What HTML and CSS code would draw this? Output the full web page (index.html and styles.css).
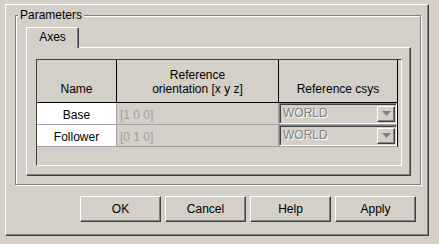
FILE: index.html
```html
<!DOCTYPE html>
<html lang="en">
<head>
  <meta charset="UTF-8" />
  <title>Parameters</title>
  <link rel="stylesheet" href="styles.css">
</head>
<body>

  <div class="window">
    <div class="group">
      <span class="group-title">Parameters</span>

      <div class="tabs">
        <div class="tab active">Axes</div>
      </div>

      <div class="tab-panel">
        <div class="table-view">
          <table class="grid">
            <colgroup>
              <col class="col-name">
              <col class="col-vec">
              <col class="col-csys">
            </colgroup>
            <thead>
              <tr class="head">
                <th>Name</th>
                <th>Reference<br>orientation [x y z]</th>
                <th class="last">Reference csys</th>
              </tr>
            </thead>
            <tbody>
              <tr>
                <td class="name">Base</td>
                <td class="vec">[1 0 0]</td>
                <td class="csys">
                  <div class="combo">
                    <span class="combo-text">WORLD</span>
                    <span class="combo-btn">
                      <svg width="9" height="5" viewBox="0 0 9 5"><path d="M0 0h9L4.5 5z" fill="#808080"/></svg>
                    </span>
                  </div>
                </td>
              </tr>
              <tr>
                <td class="name">Follower</td>
                <td class="vec">[0 1 0]</td>
                <td class="csys">
                  <div class="combo">
                    <span class="combo-text">WORLD</span>
                    <span class="combo-btn">
                      <svg width="9" height="5" viewBox="0 0 9 5"><path d="M0 0h9L4.5 5z" fill="#808080"/></svg>
                    </span>
                  </div>
                </td>
              </tr>
            </tbody>
          </table>
        </div>
      </div>
    </div>

    <div class="buttons">
      <button type="button">OK</button>
      <button type="button">Cancel</button>
      <button type="button">Help</button>
      <button type="button">Apply</button>
    </div>
  </div>

</body>
</html>
```

FILE: styles.css
```css
body {
  margin: 0;
  background: #d4d0c8;
  font-family: 'Liberation Sans', Arial, sans-serif;
  font-size: 12px;
  color: #000;
}

.window {
  box-sizing: border-box;
  width: 424px;
  height: 232px;
  margin: 4px 0 0 5px;
  padding: 10px 0 0 9px;
  border: 1px solid;
  border-color: #fff #404040 #404040 #fff;
  box-shadow: inset -1px -1px 0 #808080;
  display: flex;
  flex-direction: column;
}

/* etched group box */
.group {
  box-sizing: border-box;
  width: 406px;
  height: 170px;
  padding-left: 10px;
  border: 1px solid #808080;
  box-shadow: 1px 1px 0 #fff, inset 1px 1px 0 #fff;
  display: flex;
  flex-direction: column;
}

.group-title {
  align-self: flex-start;
  margin: -8px 0 0 -8px;
  padding: 0 2px;
  line-height: 14px;
  background: #d4d0c8;
}

.tabs {
  display: flex;
  margin-top: 5px;
}

.tab {
  position: relative;
  z-index: 1;
  box-sizing: border-box;
  width: 53px;
  height: 21px;
  margin-bottom: -1px;
  border-top: 1px solid #fff;
  border-left: 1px solid #fff;
  border-right: 1px solid #404040;
  border-top-right-radius: 2px;
  box-shadow: inset -1px 0 0 #808080;
  background: #d4d0c8;
  text-align: center;
  line-height: 19px;
}

.tab-panel {
  box-sizing: border-box;
  width: 385px;
  height: 129px;
  padding: 11px 0 0 9px;
  border: 1px solid;
  border-color: #fff #404040 #404040 #fff;
  box-shadow: inset -1px -1px 0 #808080;
}

.table-view {
  box-sizing: border-box;
  width: 366px;
  height: 107px;
  border: 1px solid;
  border-color: #404040 #fff #fff #404040;
}

.grid {
  table-layout: fixed;
  width: 361px;
  border-collapse: separate;
  border-spacing: 0;
}

.col-name { width: 80px; }
.col-vec { width: 162px; }
.col-csys { width: 119px; }

.grid tr { height: 22px; }
.grid tr.head { height: 43px; }

.grid th {
  padding: 0 2px 6px;
  border-right: 1px solid #000;
  border-bottom: 1px solid #000;
  vertical-align: bottom;
  font-weight: normal;
  line-height: 14px;
  text-align: center;
}

.grid td {
  padding: 5px 0 0;
  border-right: 1px solid #a0a0a0;
  border-bottom: 1px solid #a0a0a0;
  vertical-align: top;
  line-height: 14px;
}

.grid td.name {
  background: #fff;
  text-align: center;
}

.grid td.vec {
  padding-left: 3px;
  color: #a0a0a0;
}

.grid td.csys {
  padding: 0;
  border-right-color: #000;
}

.combo {
  box-sizing: border-box;
  height: 21px;
  padding: 0 1px 0 3px;
  border: 1px solid;
  border-color: #808080 #fff #fff #808080;
  box-shadow: inset 1px 1px 0 #404040;
  display: flex;
  align-items: center;
}

.combo-text {
  flex: 1;
  padding-bottom: 2px;
  color: #808080;
  text-shadow: 1px 1px 0 #fff;
}

.combo-btn {
  box-sizing: border-box;
  width: 18px;
  height: 16px;
  border: 1px solid;
  border-color: #fff #404040 #404040 #fff;
  box-shadow: inset -1px -1px 0 #808080;
  display: flex;
  align-items: center;
  justify-content: center;
}

.buttons {
  display: flex;
  gap: 4px;
  margin: 11px 0 0 65px;
}

.buttons button {
  width: 81px;
  height: 26px;
  padding: 0;
  font: inherit;
  color: #000;
  background: #d4d0c8;
  border: 1px solid;
  border-color: #fff #404040 #404040 #fff;
  box-shadow: inset -1px -1px 0 #808080;
}
```
